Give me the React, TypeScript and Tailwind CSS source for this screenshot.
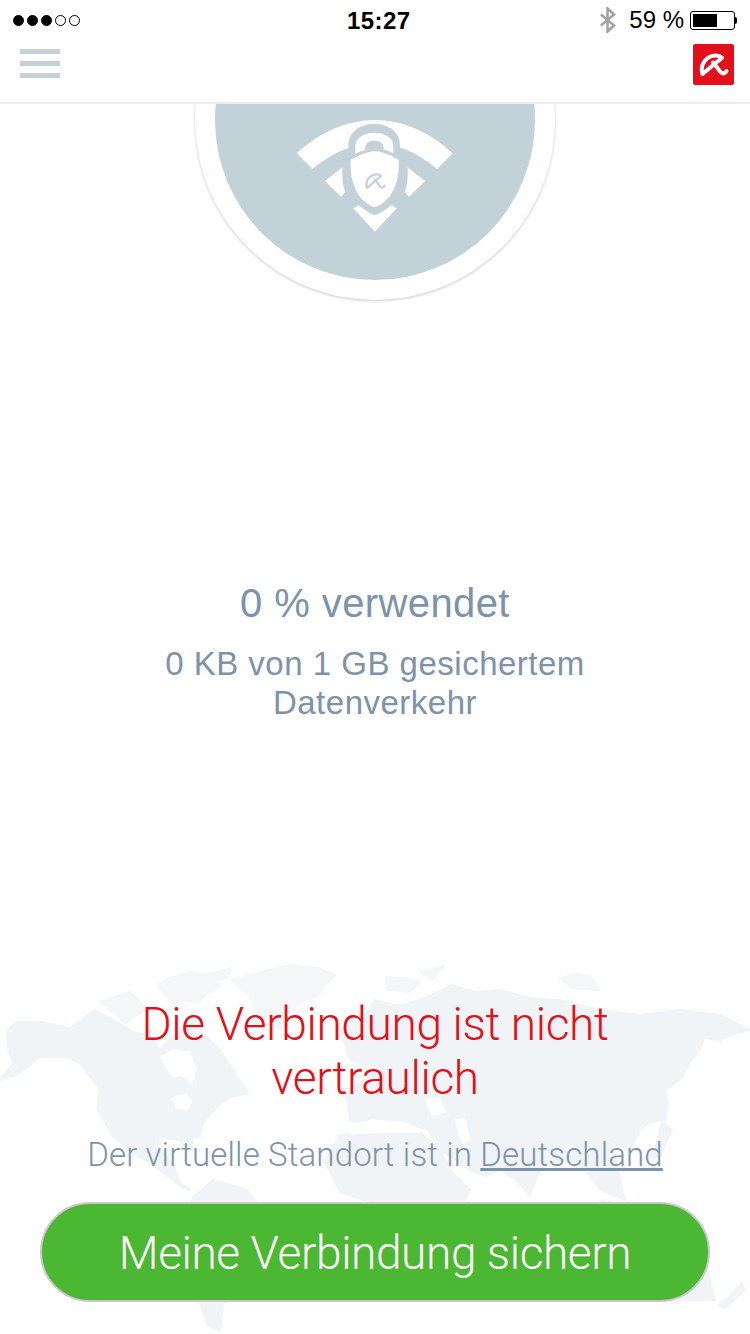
const slate = "text-[#7c93ab]";
const light = "font-['Roboto','Liberation_Sans',sans-serif] font-light";

function SignalDots() {
  return (
    <div className="flex items-center gap-[3px]">
      {[true, true, true, false, false].map((on, i) => (
        <span
          key={i}
          className={`h-[11px] w-[11px] rounded-full border border-black ${on ? "bg-black" : "bg-white"}`}
        />
      ))}
    </div>
  );
}

function StatusBar() {
  return (
    <div className="relative flex h-10 shrink-0 items-center justify-between pl-[13px] pr-[13px] text-black">
      <SignalDots />
      <span className="absolute left-[347px] top-[7px] text-[24px] leading-[28px] font-bold tracking-[0.4px]">15:27</span>
      <div className="flex items-center">
        <svg width="18" height="26" viewBox="0 0 18 26" fill="none" stroke="#a3a3a3" strokeWidth="2.6" className="mr-[12px]">
          <path d="M2 7.500 15 18.500 8.500 24.500V1.500L15 7.500 2 18.500" />
        </svg>
        <span className="mr-[6px] text-[24px] leading-[28px]">59 %</span>
        <div className="flex items-center">
          <div className="h-[19px] w-[45px] rounded-[3px] border border-black p-[2px]">
            <div className="h-full w-[24px] bg-black" />
          </div>
          <div className="h-[7px] w-[2px] rounded-r-sm bg-black" />
        </div>
      </div>
    </div>
  );
}

function AviraLogo({ width = 3.4 }: { width?: number }) {
  return (
    <svg viewBox="0 0 41 41" className="h-full w-full" fill="none" stroke="#ffffff" strokeWidth={width} strokeLinecap="round" strokeLinejoin="round">
      <path d="M9.500 30C6.500 21 13 11.500 23 11.500c2.500 0 4.500.8 6 2.200L9.500 30Z" />
      <path d="M20 18.500c3 3 5 6.500 7.500 9.500 2 2.300 5 1.500 6-1" />
    </svg>
  );
}

function Header() {
  return (
    <header className="relative z-10 flex h-[64px] shrink-0 items-start justify-between border-b-2 border-[#eeeeee] bg-white pl-5 pr-4">
      <div className="mt-[9px] flex w-10 flex-col gap-[7px]">
        <span className="h-[5px] bg-[#c3d2d8]" />
        <span className="h-[5px] bg-[#c3d2d8]" />
        <span className="h-[5px] bg-[#c3d2d8]" />
      </div>
      <div className="mt-1 h-[41px] w-[41px] rounded-[2px] bg-[#e2101a]">
        <AviraLogo width={4} />
      </div>
    </header>
  );
}

// wifi arcs with the padlock in front, drawn on a 3x grid
function VpnBadge() {
  const bg = "#c3d2d8";
  return (
    <svg width="190" height="130" viewBox="0 0 570 390" className="block">
      <g fill="#ffffff">
        <path d="M50 130C120 65 205 30 285 30s165 35 233 100l-46 47C395 115 340 103 285 103S175 115 97 177Z" />
        <path d="M135 213 187 172C186 200 188 230 196 245L183 260Z" />
        <path d="M435 213 383 172C384 200 382 230 374 245L387 260Z" />
        <path d="M220 295 235 285C255 300 270 312 285 315 300 312 315 300 335 285L350 295 285 365Z" />
      </g>
      <path d="M205 170V108C205 65 240 42 283 42s77 23 77 66v62Z" fill={bg} />
      <path d="M226 150V108C226 85 250 68 283 68s57 17 57 40v42Z" fill="#ffffff" />
      <path d="M256 135V112C256 100 268 92 283 92s28 8 28 20v23Z" fill={bg} />
      <path d="M285 124C310 126 335 136 356 150 360 215 335 275 284 292 232 275 208 215 212 150 235 136 260 126 285 124Z" fill="#ffffff" stroke={bg} strokeWidth="20" paintOrder="stroke" />
      <svg x="240" y="168" width="90" height="90" viewBox="0 0 41 41">
        <g fill="none" stroke={bg} strokeWidth="3" strokeLinecap="round" strokeLinejoin="round">
          <path d="M9.500 30C6.500 21 13 11.500 23 11.500c2.500 0 4.500.8 6 2.200L9.500 30Z" />
          <path d="M20 18.500c3 3 5 6.500 7.500 9.500 2 2.300 5 1.500 6-1" />
        </g>
      </svg>
    </svg>
  );
}

function WorldMap() {
  return (
    <svg className="absolute bottom-0 left-0" width="750" height="384" viewBox="0 950 750 384" fill="#f1f4f6" stroke="#f1f4f6" strokeWidth="2" strokeLinejoin="round">
      {/* arctic islands and greenland */}
      <g opacity="0.75">
        <path d="M157 985 170 978 190 972 205 975 232 968 226 978 212 982 222 986 204 996 198 1003 184 1000 176 1006 166 996Z" />
        <path d="M100 1002 118 996 130 992 140 1002 150 1010 134 1016 125 1024 118 1016 112 1012Z" />
        <path d="M232 980 262 972 290 965 318 968 335 975 324 986 318 996 304 1000 296 1006 288 1018 282 1030 272 1024 262 1018 254 1006 250 996 240 988Z" />
        <path d="M385 977 404 978 420 982 410 992 388 990Z" />
        <path d="M560 978 576 974 590 976 600 990 572 988Z" />
        <path d="M420 972 444 966 432 980Z" />
      </g>
      {/* north and central america */}
      <path d="M7 1030 17 1022 40 1022 70 1028 84 1018 95 1010 113 1020 133 1032 150 1035 160 1050 172 1036 190 1024 207 1037 220 1050 233 1070 248 1093 230 1097 217 1107 203 1123 200 1137 192 1138 194 1150 186 1148 180 1140 160 1137 156 1148 163 1153 173 1163 180 1183 190 1190 180 1186 160 1170 133 1153 113 1137 97 1107 100 1090 80 1063 67 1057 40 1057 20 1073 0 1080 13 1063 8 1050Z" />
      {/* south america */}
      <path d="M193 1197 213 1180 247 1190 257 1203 300 1240 262 1288 223 1303 220 1330 208 1326 200 1303 186 1232Z" />
      {/* europe and asia */}
      <path d="M340 1030 360 1022 375 1000 398 1006 420 1000 438 992 452 985 476 992 500 990 530 998 560 1000 600 1010 640 1015 680 1010 720 1015 750 1030 734 1034 720 1040 704 1038 700 1050 690 1062 680 1080 665 1090 668 1104 665 1120 650 1122 640 1130 630 1150 610 1140 616 1160 620 1180 625 1200 600 1190 584 1168 570 1160 552 1162 540 1170 530 1195 516 1180 500 1170 486 1176 470 1170 455 1160 440 1150 428 1130 400 1120 380 1130 350 1120 345 1090 362 1082 375 1070 350 1060Z" />
      {/* africa */}
      <path d="M340 1135 372 1130 420 1132 440 1150 452 1172 470 1190 458 1214 450 1250 425 1282 410 1270 402 1252 396 1228 392 1204 364 1200 340 1192 325 1162Z" />
      {/* islands of the far east and pacific */}
      <path d="M640 1160 655 1150 662 1122 672 1130 660 1156Z" />
      <path d="M600 1200 625 1205 660 1215 640 1222 610 1212Z" />
      <path d="M620 1240 700 1240 715 1300 650 1300Z" />
      <path d="M718 1305 730 1296 742 1283 745 1290 725 1308Z" />
      {/* inland water */}
      <g fill="#ffffff" stroke="#ffffff" strokeWidth="1">
        <path d="M160 1058 172 1050 190 1052 196 1070 192 1084 182 1076 172 1076Z" />
        <path d="M172 1098 186 1094 192 1100 188 1110 176 1108Z" />
        <path d="M345 1126 372 1120 400 1122 420 1132 386 1132 350 1134Z" />
        <path d="M425 1100 440 1098 446 1112 432 1116Z" />
        <path d="M455 1120 465 1118 470 1140 462 1142Z" />
      </g>
    </svg>
  );
}

export default function App() {
  return (
    <div className="relative flex h-[1334px] w-[750px] flex-col overflow-hidden bg-white font-['Liberation_Sans',Arial,sans-serif]">
      <StatusBar />
      <Header />
      <WorldMap />

      <main className="relative flex flex-1 flex-col items-center overflow-hidden text-center">
        <div className="-mt-[164px] h-[360px] w-[360px] shrink-0 rounded-full bg-white p-5 shadow-[0_1px_3px_rgba(0,0,0,0.22)]">
          <div className="flex h-[320px] w-[320px] justify-center rounded-full bg-[#c3d2d8] pt-[150px]">
            <VpnBadge />
          </div>
        </div>

        <h2 className={`mt-[280px] text-[40px] leading-[46px] tracking-[0.4px] ${slate}`}>0 % verwendet</h2>
        <p className={`mt-[18px] text-[33px] leading-[39px] tracking-[0.5px] ${slate}`}>
          0 KB von 1 GB gesichertem
          <br />
          Datenverkehr
        </p>

        <h1 className={`mt-[275px] text-[46px] leading-[54px] tracking-[-0.35px] text-[#e2101a] ${light}`}>
          Die Verbindung ist nicht
          <br />
          vertraulich
        </h1>
        <p className={`mt-[30px] text-[33px] leading-[40px] tracking-[0.15px] ${slate} ${light}`}>
          Der virtuelle Standort ist in <span className="underline">Deutschland</span>
        </p>

        <button className={`mt-[27px] h-[100px] w-[670px] rounded-full border-2 border-[#c8c8c8] bg-[#4cb733] pt-[3px] text-[46px] tracking-[-0.4px] text-white ${light}`}>
          Meine Verbindung sichern
        </button>
      </main>
    </div>
  );
}
